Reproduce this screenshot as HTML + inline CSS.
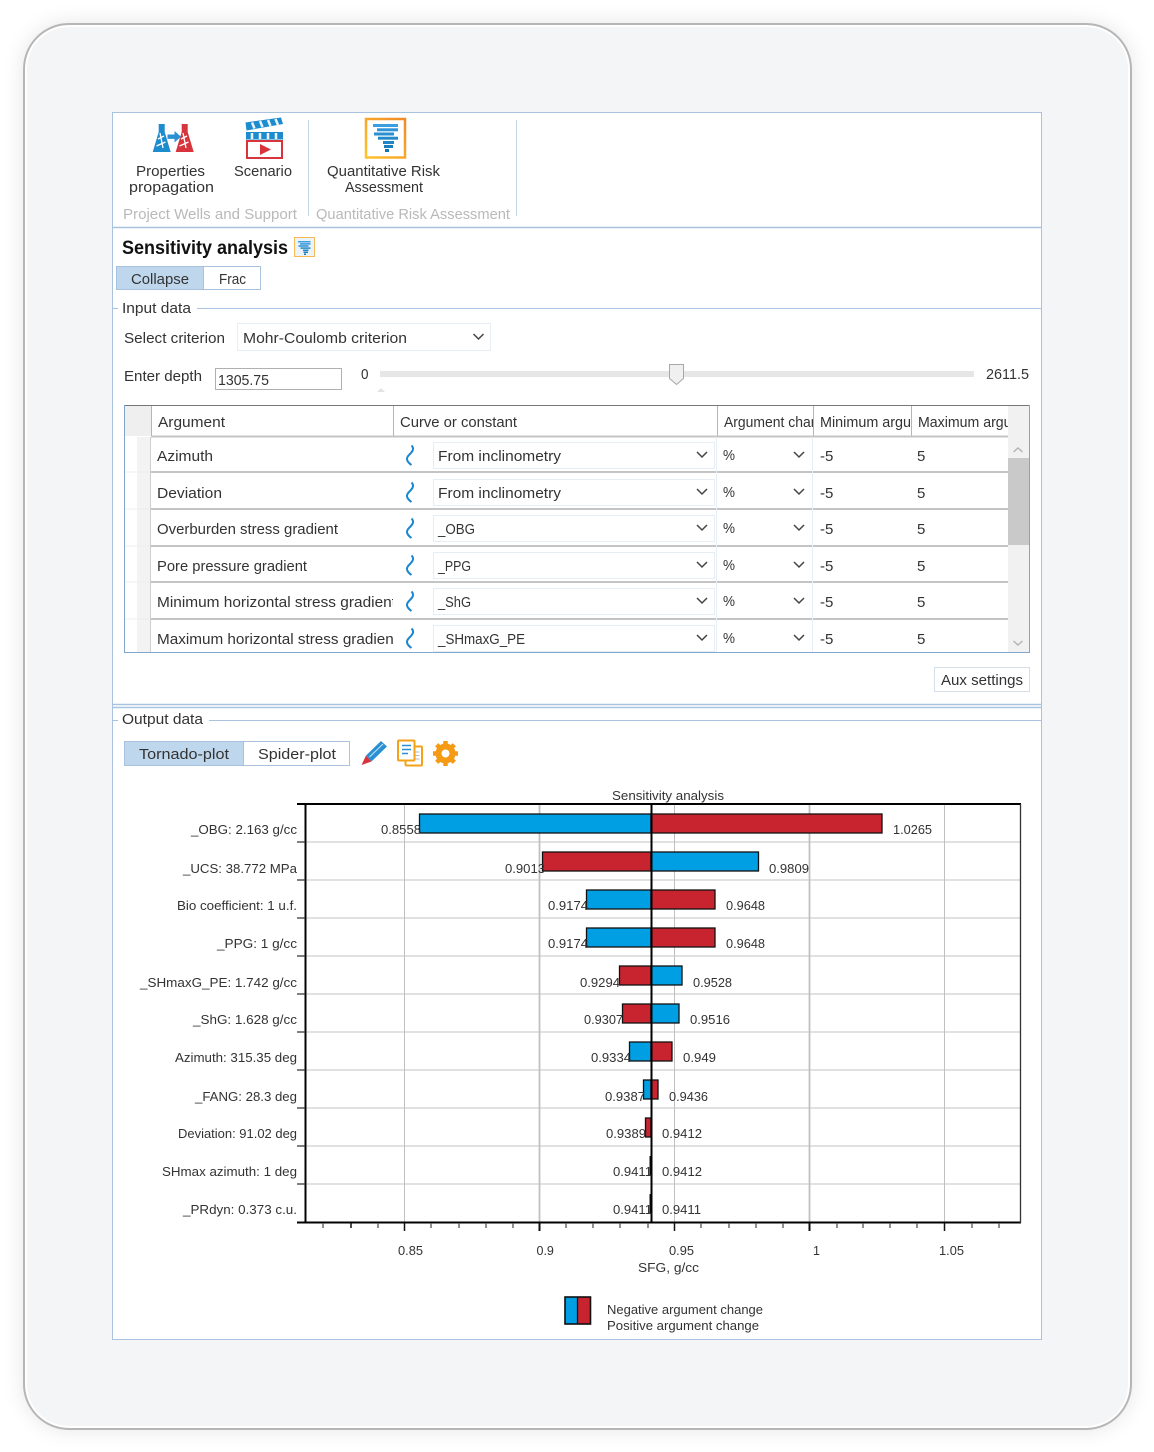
<!DOCTYPE html>
<html lang="en">
<head>
<meta charset="utf-8">
<title>Sensitivity analysis</title>
<style>
html,body{margin:0;padding:0;background:#fff;width:1154px;height:1452px;overflow:hidden}
#card{position:absolute;left:23px;top:23px;width:1105px;height:1403px;border:2px solid #b6b6b6;border-radius:46px;background:#f4f5f7;box-shadow:0 0 22px rgba(0,0,0,.10),inset 0 0 0 2px #fff}
svg#p{position:absolute;left:0;top:0}
text{font-family:"Liberation Sans",sans-serif;fill:#333}
.u{font-size:15px}
.g{font-size:15px;fill:#b9b9b9}
.c{font-size:12.5px;fill:#333}
</style>
</head>
<body>
<div id="card"></div>
<svg id="p" width="1154" height="1452" viewBox="0 0 1154 1452" xmlns="http://www.w3.org/2000/svg">
<defs>
<linearGradient id="ob" x1="0" y1="1" x2="1" y2="0"><stop offset="0" stop-color="#ffc42a"/><stop offset="1" stop-color="#f08a2a"/></linearGradient>
<g id="chev"><path d="M-5 -3L0 2L5 -3" fill="none" stroke="#444" stroke-width="1.5"/></g>
<g id="wave"><path d="M411.500 -9.500C415 -6 412 -3 409 0C406 3 406 6 411.500 10" fill="none" stroke="#1b87d0" stroke-width="2"/></g>
<g id="tor">
<rect x="0" y="0" width="25" height="3" fill="#3a9fe0"/>
<rect x="4" y="4.300" width="21" height="3" fill="#2f95d8"/>
<rect x="1" y="8.500" width="20" height="3" fill="#2a8ed2"/>
<rect x="5" y="12.700" width="20" height="3" fill="#258aca"/>
<rect x="10" y="17" width="11" height="3" fill="#2085c4"/>
<rect x="11" y="21" width="9" height="3" fill="#1a7dbc"/>
<rect x="12" y="25" width="4" height="3" fill="#1673b3"/>
</g>
<clipPath id="c1"><rect x="150" y="590" width="243" height="60"/></clipPath>
<clipPath id="c2"><rect x="720" y="406" width="93" height="30"/></clipPath>
<clipPath id="c3"><rect x="816" y="406" width="95" height="30"/></clipPath>
<clipPath id="c4"><rect x="914" y="406" width="94" height="30"/></clipPath>
</defs>

<!-- main panel -->
<rect x="112.500" y="112.500" width="929" height="1227" fill="#fff" stroke="#a9c3df"/>
<path d="M113 227.500H1041M113 704.500H1041M113 707.500H1041" stroke="#a9c3df" stroke-width="1.400" fill="none"/>
<path d="M308.500 120V216M516.500 120V216" stroke="#c6d6e6" fill="none"/>

<!-- properties icon -->
<g>
<path d="M158.700 124h6v8l6 20h-18l6-20z" fill="#1d8ccf"/>
<path d="M158 139l6-3M156.500 146l9-4M160 133l3 15" stroke="#fff" stroke-width="1.300" fill="none"/>
<path d="M181.700 124h6v8l6 20h-18l6-20z" fill="#d8343d"/>
<path d="M181 139l6-3M179.500 146l9-4M183 133l3 15" stroke="#fff" stroke-width="1.300" fill="none"/>
<path d="M167.500 134.500h7v-3.500l6.500 5.700-6.500 5.700v-3.500h-7z" fill="#2a90d4"/>
</g>
<!-- scenario icon -->
<g>
<path d="M245.500 122.500l35.500-5 2 6.500-36.500 6.500z" fill="#1d8ccf"/>
<path d="M252 122.500l2.500 6M260 121l2.500 6M268 120l2.500 6M275.500 119l2.500 6" stroke="#e8f3fb" stroke-width="2.500"/>
<rect x="246" y="132" width="37" height="7.500" fill="#1d8ccf"/>
<path d="M252 133v6M260 133v6M268 133v6M276 133v6" stroke="#e8f3fb" stroke-width="2.500"/>
<rect x="247" y="141" width="35" height="17" fill="#fff" stroke="#d8343d" stroke-width="2"/>
<path d="M260 144l11 5.500-11 5.500z" fill="#d8343d"/>
</g>
<!-- QRA icon -->
<rect x="366" y="119" width="39" height="38.500" fill="#fff" stroke="url(#ob)" stroke-width="2.500"/>
<use href="#tor" x="373" y="124"/>

<text class="u" x="136" y="176" textLength="69" lengthAdjust="spacingAndGlyphs">Properties</text>
<text class="u" x="129" y="192" textLength="85" lengthAdjust="spacingAndGlyphs">propagation</text>
<text class="u" x="234" y="176" textLength="58" lengthAdjust="spacingAndGlyphs">Scenario</text>
<text class="u" x="327" y="176" textLength="113" lengthAdjust="spacingAndGlyphs">Quantitative Risk</text>
<text class="u" x="345" y="192" textLength="78" lengthAdjust="spacingAndGlyphs">Assessment</text>
<text class="g" x="123" y="219" textLength="174" lengthAdjust="spacingAndGlyphs">Project Wells and Support</text>
<text class="g" x="316" y="219" textLength="194" lengthAdjust="spacingAndGlyphs">Quantitative Risk Assessment</text>

<!-- title -->
<text x="122" y="254" font-size="19" font-weight="700" style="fill:#111" textLength="166" lengthAdjust="spacingAndGlyphs">Sensitivity analysis</text>
<rect x="294.500" y="237.500" width="20" height="19" fill="#eaf3fa" stroke="#f7b955"/>
<use href="#tor" transform="translate(298 241) scale(.5)"/>

<!-- tabs -->
<rect x="116.500" y="266.500" width="87" height="23" fill="#bfd7ec" stroke="#a9c3df"/>
<rect x="203.500" y="266.500" width="57" height="23" fill="#fff" stroke="#a9c3df"/>
<text class="u" x="131" y="284" textLength="58" lengthAdjust="spacingAndGlyphs">Collapse</text>
<text class="u" x="219" y="284" textLength="27" lengthAdjust="spacingAndGlyphs">Frac</text>

<!-- input data -->
<path d="M113 308.500H118M197 308.500H1041" stroke="#a9c3df" fill="none"/>
<text class="u" x="122" y="313" textLength="69" lengthAdjust="spacingAndGlyphs">Input data</text>
<text class="u" x="124" y="343" textLength="101" lengthAdjust="spacingAndGlyphs">Select criterion</text>
<rect x="237.500" y="323.500" width="253" height="27" fill="#fff" stroke="#e6edf4"/>
<text class="u" x="243" y="343" textLength="164" lengthAdjust="spacingAndGlyphs">Mohr-Coulomb criterion</text>
<use href="#chev" x="478.500" y="337"/>
<text class="u" x="124" y="381" textLength="78" lengthAdjust="spacingAndGlyphs">Enter depth</text>
<rect x="215.500" y="368.500" width="126" height="21" fill="#fff" stroke="#b0b0b0"/>
<text class="u" x="218" y="385" textLength="51" lengthAdjust="spacingAndGlyphs">1305.75</text>
<text class="u" x="361" y="379" textLength="7.500" lengthAdjust="spacingAndGlyphs">0</text>
<rect x="380" y="371" width="594" height="6" fill="#e6e6e6"/>
<path d="M377 392l4-4 4 4z" fill="#e3e3e3"/>
<path d="M669.500 364.500h14v14l-7 6-7-6z" fill="#f0f0f0" stroke="#a8a8a8"/>
<text class="u" x="986" y="379" textLength="43" lengthAdjust="spacingAndGlyphs">2611.5</text>

<!-- table -->
<rect x="124.500" y="405.500" width="905" height="247" fill="#fff" stroke="#7fa6cc"/>
<rect x="125" y="406" width="26" height="30" fill="#efefef"/>
<rect x="137" y="437" width="14" height="215" fill="#f3f3f3"/>
<rect x="1008" y="406" width="21" height="246" fill="#f1f1f1"/>
<rect x="1008" y="458" width="21" height="87" fill="#c9c9c9"/>
<path d="M1013.500 452l4.500-4 4.500 4M1013.500 641l4.500 4 4.500-4" stroke="#b5b5b5" stroke-width="1.500" fill="none"/>
<path d="M151.500 406V436M393.500 406V436M717.500 406V436M813.500 406V436M911.500 406V436" stroke="#b5b5b5" fill="none"/>
<path d="M125 405.500H1029" stroke="#777" fill="none"/>
<path d="M151 436.500H1008M151 472H1008M151 509H1008M151 546H1008M151 582H1008M151 619H1008" stroke="#c4c4c4" stroke-width="2" fill="none"/>
<path d="M125 472H151M125 509H151M125 546H151M125 582H151M125 619H151" stroke="#ededed" fill="none"/>
<path d="M150.500 437V652" stroke="#cfcfcf" fill="none"/>
<path d="M812.500 437V652M716.500 437V652" stroke="#e8eef5" fill="none"/>
<text class="u" x="158" y="427" textLength="67" lengthAdjust="spacingAndGlyphs">Argument</text>
<text class="u" x="400" y="427" textLength="117" lengthAdjust="spacingAndGlyphs">Curve or constant</text>
<text class="u" x="724" y="427" clip-path="url(#c2)" textLength="110" lengthAdjust="spacingAndGlyphs">Argument change</text>
<text class="u" x="820" y="427" clip-path="url(#c3)" textLength="123" lengthAdjust="spacingAndGlyphs">Minimum argument</text>
<text class="u" x="918" y="427" clip-path="url(#c4)" textLength="125" lengthAdjust="spacingAndGlyphs">Maximum argument</text>

<!-- combo boxes -->
<g fill="#fff" stroke="#e6edf4">
<rect x="433.500" y="442.500" width="281" height="26"/>
<rect x="433.500" y="479.500" width="281" height="26"/>
<rect x="433.500" y="515.500" width="281" height="26"/>
<rect x="433.500" y="552.500" width="281" height="26"/>
<rect x="433.500" y="588.500" width="281" height="26"/>
<rect x="433.500" y="625.500" width="281" height="26"/>
</g>
<use href="#wave" y="455"/><use href="#wave" y="492"/><use href="#wave" y="528"/><use href="#wave" y="565"/><use href="#wave" y="601"/><use href="#wave" y="638"/>
<use href="#chev" x="702" y="455"/><use href="#chev" x="702" y="492"/><use href="#chev" x="702" y="528"/><use href="#chev" x="702" y="565"/><use href="#chev" x="702" y="601"/><use href="#chev" x="702" y="638"/>
<use href="#chev" x="799" y="455"/><use href="#chev" x="799" y="492"/><use href="#chev" x="799" y="528"/><use href="#chev" x="799" y="565"/><use href="#chev" x="799" y="601"/><use href="#chev" x="799" y="638"/>

<text class="u" x="157" y="461" textLength="56" lengthAdjust="spacingAndGlyphs">Azimuth</text>
<text class="u" x="157" y="498" textLength="65" lengthAdjust="spacingAndGlyphs">Deviation</text>
<text class="u" x="157" y="534" textLength="181" lengthAdjust="spacingAndGlyphs">Overburden stress gradient</text>
<text class="u" x="157" y="571" textLength="150" lengthAdjust="spacingAndGlyphs">Pore pressure gradient</text>
<text class="u" x="157" y="607" clip-path="url(#c1)" textLength="239" lengthAdjust="spacingAndGlyphs">Minimum horizontal stress gradient</text>
<text class="u" x="157" y="644" clip-path="url(#c1)" textLength="241" lengthAdjust="spacingAndGlyphs">Maximum horizontal stress gradient</text>

<text class="u" x="438" y="461" textLength="123" lengthAdjust="spacingAndGlyphs">From inclinometry</text>
<text class="u" x="438" y="498" textLength="123" lengthAdjust="spacingAndGlyphs">From inclinometry</text>
<text class="u" x="438" y="534" textLength="37" lengthAdjust="spacingAndGlyphs">_OBG</text>
<text class="u" x="438" y="571" textLength="33" lengthAdjust="spacingAndGlyphs">_PPG</text>
<text class="u" x="438" y="607" textLength="33" lengthAdjust="spacingAndGlyphs">_ShG</text>
<text class="u" x="438" y="644" textLength="87" lengthAdjust="spacingAndGlyphs">_SHmaxG_PE</text>

<g>
<text class="u" x="723" y="460" textLength="12" lengthAdjust="spacingAndGlyphs">%</text><text class="u" x="723" y="497" textLength="12" lengthAdjust="spacingAndGlyphs">%</text><text class="u" x="723" y="533" textLength="12" lengthAdjust="spacingAndGlyphs">%</text><text class="u" x="723" y="570" textLength="12" lengthAdjust="spacingAndGlyphs">%</text><text class="u" x="723" y="606" textLength="12" lengthAdjust="spacingAndGlyphs">%</text><text class="u" x="723" y="643" textLength="12" lengthAdjust="spacingAndGlyphs">%</text>
<text class="u" x="820" y="461">-5</text><text class="u" x="820" y="498">-5</text><text class="u" x="820" y="534">-5</text><text class="u" x="820" y="571">-5</text><text class="u" x="820" y="607">-5</text><text class="u" x="820" y="644">-5</text>
<text class="u" x="917" y="461">5</text><text class="u" x="917" y="498">5</text><text class="u" x="917" y="534">5</text><text class="u" x="917" y="571">5</text><text class="u" x="917" y="607">5</text><text class="u" x="917" y="644">5</text>
</g>

<rect x="934.500" y="667.500" width="95" height="24" fill="#fff" stroke="#d5dfe9"/>
<text class="u" x="941" y="685" textLength="82" lengthAdjust="spacingAndGlyphs">Aux settings</text>

<!-- output data -->
<path d="M113 720.500H118M209 720.500H1041" stroke="#a9c3df" fill="none"/>
<text class="u" x="122" y="724" textLength="81" lengthAdjust="spacingAndGlyphs">Output data</text>
<rect x="124.500" y="741.500" width="119" height="24" fill="#bfd7ec" stroke="#a9c3df"/>
<rect x="243.500" y="741.500" width="106" height="24" fill="#fff" stroke="#a9c3df"/>
<text class="u" x="139" y="759" textLength="90" lengthAdjust="spacingAndGlyphs">Tornado-plot</text>
<text class="u" x="258" y="759" textLength="78" lengthAdjust="spacingAndGlyphs">Spider-plot</text>

<!-- pencil -->
<path d="M366 755.500L381 741l6 5.500-15.500 15z" fill="#2a90d4"/>
<path d="M369.500 757L383 744" stroke="#cfe6f6" stroke-width="1"/>
<path d="M366 755.500l5.500 6-10 3.500z" fill="#d8343d"/>
<!-- documents -->
<rect x="405.500" y="746.500" width="16.500" height="19" rx="1" fill="#fff" stroke="#f5a21b" stroke-width="2"/>
<path d="M415.500 752h4M415.500 755.500h4M415.500 759h4" stroke="#b8b8b8" stroke-width="1"/>
<rect x="398" y="740.500" width="16.500" height="20" rx="1" fill="#fff" stroke="#f5a21b" stroke-width="2"/>
<path d="M402 745.500h9M402 749.500h9M402 753.500h6" stroke="#2a90d4" stroke-width="1.500"/>
<!-- gear -->
<circle cx="445.500" cy="753.500" r="7.500" fill="none" stroke="#f59a15" stroke-width="5"/>
<g stroke="#f59a15" stroke-width="4.500">
<path d="M445.500 741v25M433 753.500h25M436.700 744.700l17.600 17.600M454.300 744.700l-17.600 17.600"/>
</g>
<circle cx="445.500" cy="753.500" r="4" fill="#fff"/>

<!-- chart grid -->
<path d="M306 842H1020M306 880H1020M306 918H1020M306 956H1020M306 994H1020M306 1032H1020M306 1070H1020M306 1108H1020M306 1146H1020M306 1184H1020" stroke="#cfcfcf" stroke-width="1.200" fill="none"/>
<path d="M404.500 804V1222M674.500 804V1222M944.500 804V1222" stroke="#c0c0c0" fill="none"/>
<path d="M539.500 804V1222M809.500 804V1222" stroke="#c0c0c0" stroke-width="1.800" fill="none"/>

<!-- bars -->
<g stroke="#111" stroke-width="1.300">
<rect x="419.500" y="814" width="231.500" height="19" fill="#009fe3"/>
<rect x="651" y="814" width="231" height="19" fill="#c8242f"/>
<rect x="542.500" y="852" width="108.500" height="19" fill="#c8242f"/>
<rect x="651" y="852" width="107.500" height="19" fill="#009fe3"/>
<rect x="586.500" y="890" width="64.500" height="19" fill="#009fe3"/>
<rect x="651" y="890" width="64" height="19" fill="#c8242f"/>
<rect x="586.500" y="928" width="64.500" height="19" fill="#009fe3"/>
<rect x="651" y="928" width="64" height="19" fill="#c8242f"/>
<rect x="619.500" y="966" width="31.500" height="19" fill="#c8242f"/>
<rect x="651" y="966" width="31" height="19" fill="#009fe3"/>
<rect x="622.500" y="1004" width="28.500" height="19" fill="#c8242f"/>
<rect x="651" y="1004" width="28" height="19" fill="#009fe3"/>
<rect x="629.500" y="1042" width="21.500" height="19" fill="#009fe3"/>
<rect x="651" y="1042" width="21" height="19" fill="#c8242f"/>
<rect x="643.500" y="1080" width="7.500" height="19" fill="#009fe3"/>
<rect x="651" y="1080" width="7" height="19" fill="#c8242f"/>
<rect x="645.500" y="1118" width="5.500" height="19" fill="#c8242f"/>
</g>
<rect x="649.500" y="1156" width="2" height="19" fill="#111"/>
<rect x="649.500" y="1194" width="2" height="19" fill="#111"/>

<!-- axes -->
<path d="M651.500 804V1222" stroke="#000" stroke-width="2" fill="none"/>
<path d="M297 804H1021M297 1222.500H1021" stroke="#000" stroke-width="2" fill="none"/>
<path d="M305.500 804V1223" stroke="#000" stroke-width="2" fill="none"/>
<path d="M1020.500 804V1223" stroke="#333" stroke-width="1.300" fill="none"/>
<path d="M297 842H305M297 880H305M297 918H305M297 956H305M297 994H305M297 1032H305M297 1070H305M297 1108H305M297 1146H305M297 1184H305" stroke="#333" stroke-width="1.300" fill="none"/>
<path d="M323 1223v5M378 1223v5M431 1223v5M459 1223v5M486 1223v5M513 1223v5M566 1223v5M593 1223v5M620 1223v5M648 1223v5M701 1223v5M729 1223v5M756 1223v5M783 1223v5M837 1223v5M863 1223v5M890 1223v5M917 1223v5M972 1223v5M999 1223v5" stroke="#555" stroke-width="1.300" fill="none"/>
<path d="M351 1223v5M404.500 1223v8M674.500 1223v8M944.500 1223v8" stroke="#111" stroke-width="1.500" fill="none"/>
<path d="M539.500 1223v8M809.500 1223v8" stroke="#111" stroke-width="2" fill="none"/>

<!-- chart text -->
<text class="c" x="612" y="800" textLength="112" lengthAdjust="spacingAndGlyphs">Sensitivity analysis</text>
<text class="c" x="191" y="834" textLength="106" lengthAdjust="spacingAndGlyphs">_OBG: 2.163 g/cc</text>
<text class="c" x="183" y="873" textLength="114" lengthAdjust="spacingAndGlyphs">_UCS: 38.772 MPa</text>
<text class="c" x="177" y="910" textLength="120" lengthAdjust="spacingAndGlyphs">Bio coefficient: 1 u.f.</text>
<text class="c" x="217" y="948" textLength="80" lengthAdjust="spacingAndGlyphs">_PPG: 1 g/cc</text>
<text class="c" x="140" y="987" textLength="157" lengthAdjust="spacingAndGlyphs">_SHmaxG_PE: 1.742 g/cc</text>
<text class="c" x="193" y="1024" textLength="104" lengthAdjust="spacingAndGlyphs">_ShG: 1.628 g/cc</text>
<text class="c" x="175" y="1062" textLength="122" lengthAdjust="spacingAndGlyphs">Azimuth: 315.35 deg</text>
<text class="c" x="195" y="1101" textLength="102" lengthAdjust="spacingAndGlyphs">_FANG: 28.3 deg</text>
<text class="c" x="178" y="1138" textLength="119" lengthAdjust="spacingAndGlyphs">Deviation: 91.02 deg</text>
<text class="c" x="162" y="1176" textLength="135" lengthAdjust="spacingAndGlyphs">SHmax azimuth: 1 deg</text>
<text class="c" x="183" y="1214" textLength="114" lengthAdjust="spacingAndGlyphs">_PRdyn: 0.373 c.u.</text>

<text class="c" x="381" y="834" textLength="40" lengthAdjust="spacingAndGlyphs">0.8558</text>
<text class="c" x="893" y="834" textLength="39" lengthAdjust="spacingAndGlyphs">1.0265</text>
<text class="c" x="505" y="873" textLength="40" lengthAdjust="spacingAndGlyphs">0.9013</text>
<text class="c" x="769" y="873" textLength="40" lengthAdjust="spacingAndGlyphs">0.9809</text>
<text class="c" x="548" y="910" textLength="40" lengthAdjust="spacingAndGlyphs">0.9174</text>
<text class="c" x="726" y="910" textLength="39" lengthAdjust="spacingAndGlyphs">0.9648</text>
<text class="c" x="548" y="948" textLength="40" lengthAdjust="spacingAndGlyphs">0.9174</text>
<text class="c" x="726" y="948" textLength="39" lengthAdjust="spacingAndGlyphs">0.9648</text>
<text class="c" x="580" y="987" textLength="40" lengthAdjust="spacingAndGlyphs">0.9294</text>
<text class="c" x="693" y="987" textLength="39" lengthAdjust="spacingAndGlyphs">0.9528</text>
<text class="c" x="584" y="1024" textLength="39" lengthAdjust="spacingAndGlyphs">0.9307</text>
<text class="c" x="690" y="1024" textLength="40" lengthAdjust="spacingAndGlyphs">0.9516</text>
<text class="c" x="591" y="1062" textLength="40" lengthAdjust="spacingAndGlyphs">0.9334</text>
<text class="c" x="683" y="1062" textLength="33" lengthAdjust="spacingAndGlyphs">0.949</text>
<text class="c" x="605" y="1101" textLength="40" lengthAdjust="spacingAndGlyphs">0.9387</text>
<text class="c" x="669" y="1101" textLength="39" lengthAdjust="spacingAndGlyphs">0.9436</text>
<text class="c" x="606" y="1138" textLength="40" lengthAdjust="spacingAndGlyphs">0.9389</text>
<text class="c" x="662" y="1138" textLength="40" lengthAdjust="spacingAndGlyphs">0.9412</text>
<text class="c" x="613" y="1176" textLength="39" lengthAdjust="spacingAndGlyphs">0.9411</text>
<text class="c" x="662" y="1176" textLength="40" lengthAdjust="spacingAndGlyphs">0.9412</text>
<text class="c" x="613" y="1214" textLength="39" lengthAdjust="spacingAndGlyphs">0.9411</text>
<text class="c" x="662" y="1214" textLength="39" lengthAdjust="spacingAndGlyphs">0.9411</text>

<text class="c" x="398" y="1255" textLength="25" lengthAdjust="spacingAndGlyphs">0.85</text>
<text class="c" x="536.500" y="1255">0.9</text>
<text class="c" x="669" y="1255" textLength="25" lengthAdjust="spacingAndGlyphs">0.95</text>
<text class="c" x="813" y="1255">1</text>
<text class="c" x="939" y="1255" textLength="25" lengthAdjust="spacingAndGlyphs">1.05</text>
<text class="c" x="638" y="1272" textLength="61" lengthAdjust="spacingAndGlyphs">SFG, g/cc</text>

<!-- legend -->
<rect x="565" y="1297" width="13" height="27" fill="#009fe3"/>
<rect x="578" y="1297" width="12.500" height="27" fill="#c8242f"/>
<rect x="565" y="1297" width="25.500" height="27" fill="none" stroke="#111" stroke-width="1.600"/>
<path d="M577.500 1297V1324" stroke="#111" stroke-width="1.300"/>
<text class="c" x="607" y="1314" textLength="156" lengthAdjust="spacingAndGlyphs">Negative argument change</text>
<text class="c" x="607" y="1330" textLength="152" lengthAdjust="spacingAndGlyphs">Positive argument change</text>
</svg>
</body>
</html>
